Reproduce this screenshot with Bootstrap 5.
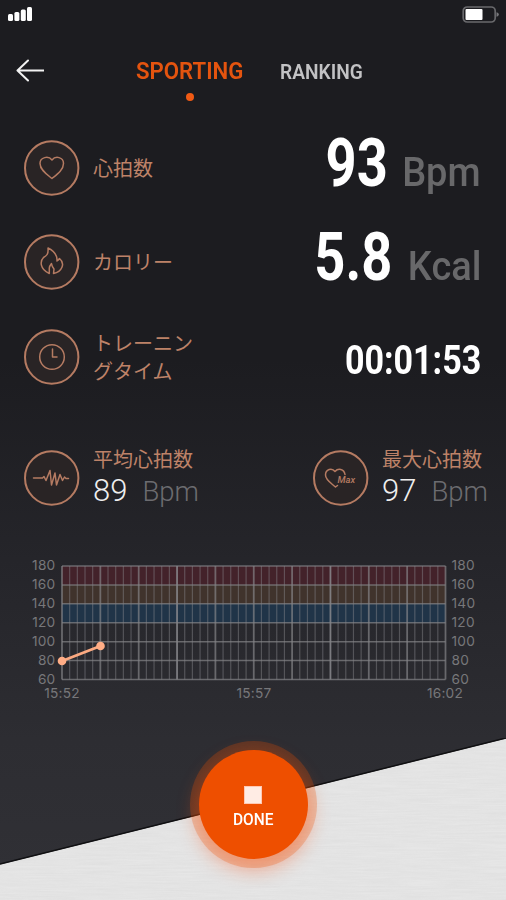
<!DOCTYPE html>
<html lang="ja">
<head>
<meta charset="utf-8">
<meta name="viewport" content="width=device-width, initial-scale=1">
<title>Sporting</title>
<link href="https://cdn.jsdelivr.net/npm/bootstrap@5.3.0/dist/css/bootstrap.min.css" rel="stylesheet">
<style>
body { margin: 0; background: #1c1c20; }
.screen { width: 506px; height: 900px; background: linear-gradient(#1c1c20 0, #1c1c20 360px, #25252a 560px, #2d2d32 740px, #303035 870px); font-family: Roboto, "Noto Sans CJK JP", sans-serif; color: #fff; }
svg { display: block; flex: none; }
.status { height: 30px; padding: 6px 7px 0 8px; }
.topbar { height: 91px; padding-left: 16px; }
.back { margin-top: 28px; }
.tabs { margin-left: 92px; padding-top: 27px; }
.tab-link { display: block; line-height: 28px; font-weight: 600; white-space: nowrap; transform-origin: left; }
.tab-on { width: 107px; font-size: 24px; color: #e4540f; transform: scaleX(.925); }
.tab-off { font-size: 20.5px; color: #c2c2c4; margin: 1px 0 0 37px; transform: scaleX(.935); }
.tab-dot { width: 8px; height: 8px; margin: 8px 0 0 50px; background: #f05a14; border-radius: 50%; }
.metric { height: 94.4px; padding: 0 25px 0 24px; }
.ring { stroke: #b57b62; fill: none; stroke-width: 1.5; stroke-linecap: round; stroke-linejoin: round; }
.ring-bg { fill: #292425; stroke-width: 2; }
.jp { font-family: "Noto Sans CJK JP", sans-serif; font-size: 20px; line-height: 28px; color: #bd8268; white-space: nowrap; }
.label-gap { margin-left: 13px; }
.reading { padding-bottom: 10px; }
.big { font-size: 67px; line-height: 67px; font-weight: 700; transform: scaleX(.81); transform-origin: right; }
.unit { font-size: 40px; line-height: 40px; font-weight: 500; color: #68686a; margin-left: 11px; transform: scaleX(.95); transform-origin: right; }
.clock { font-size: 41.5px; line-height: 42px; font-weight: 700; padding-top: 7px; transform: scaleX(.82); transform-origin: right; }
.averages { height: 154px; padding: 41px 18px 0 24px; }
.avg-ring { margin-top: 5px; }
.avg { font-size: 31px; line-height: 34px; margin-top: 1px; font-weight: 300; color: #eee; }
.avg-unit { font-size: 27.5px; font-weight: 300; color: #6c6c70; margin-left: 15px; }
.chart text { font-family: Inter, sans-serif; font-size: 13.7px; letter-spacing: .25px; fill: #77777a; }
.footer-stack { display: grid; height: 162px; }
.footer-stack > * { grid-area: 1 / 1; }
.done { width: 109px; height: 109px; margin-top: 12px; padding: 0; border-radius: 50%; background: #ee4f00; color: #fff; box-shadow: 0 0 0 9px rgba(238,79,0,.25), 0 8px 18px 4px rgba(255,80,20,.36); z-index: 1; }
.done:hover { background: #ee4f00; color: #fff; }
.stop { width: 18px; height: 18px; background: #ffece4; border: 1px solid #ffc9b3; margin-top: 6px; }
.done-label { font-size: 17px; line-height: 20px; margin-top: 5px; font-weight: 500; transform: scaleX(.91); }
</style>
</head>
<body>
<main class="screen d-flex flex-column overflow-hidden">
  <div class="status d-flex justify-content-between align-items-start">
    <svg width="25" height="16" fill="#fff"><rect x="0" y="8" width="5" height="7" rx="1.5"/><rect x="6.4" y="6" width="5" height="9" rx="1.5"/><rect x="12.8" y="3.5" width="5" height="11.5" rx="1.5"/><rect x="19" y="1" width="5" height="14" rx="1.5"/></svg>
    <svg width="37" height="17"><rect x="1.2" y="1" width="32" height="15" rx="4" fill="none" stroke="#69696c" stroke-width="1.7"/><rect x="3.5" y="3" width="17" height="11" rx="1" fill="#fff"/><path d="M34.5 6.2q2.3.4 2.3 2.3t-2.3 2.3z" fill="#77777a"/></svg>
  </div>

  <header class="topbar d-flex align-items-start">
    <svg class="back" width="28" height="24" fill="none" stroke="#f2f2f2" stroke-width="2" stroke-linecap="round" stroke-linejoin="round"><path d="M12 2.5 1.5 12.5 12 22.5M2 12.5h25.500"/></svg>
    <nav class="tabs d-flex">
      <div><span class="tab-link tab-on">SPORTING</span><div class="tab-dot"></div></div>
      <span class="tab-link tab-off">RANKING</span>
    </nav>
  </header>

  <section class="metric d-flex align-items-center justify-content-between">
    <div class="d-flex align-items-center">
      <svg class="ring" width="56" height="56"><circle class="ring-bg" cx="27.700" cy="28" r="26.700"/><path d="M28 38.500C23 34.500 16 30 16 23.500C16 17 24.500 15.500 28 20C31.500 15.500 39.500 17 39.500 23.500C39.500 30 33 34.500 28 38.500Z"/></svg>
      <span class="jp label-gap">心拍数</span>
    </div>
    <div class="reading d-flex align-items-baseline"><span class="big">93</span><span class="unit">Bpm</span></div>
  </section>

  <section class="metric d-flex align-items-center justify-content-between">
    <div class="d-flex align-items-center">
      <svg class="ring" width="56" height="56"><circle class="ring-bg" cx="27.700" cy="28" r="26.700"/><path d="M24 14C24.500 20 23 21.500 19.500 23.500C16 27 15.500 35 25.300 39.500V34Q25.500 32 27.500 29.500Q28 33 30 35L29.500 39.500C38 38 41.500 29.500 35.500 24.500Q34.500 26 33 27C33.500 21 29 16.500 24 14Z"/></svg>
      <span class="jp label-gap">カロリー</span>
    </div>
    <div class="reading d-flex align-items-baseline"><span class="big">5.8</span><span class="unit">Kcal</span></div>
  </section>

  <section class="metric d-flex align-items-center justify-content-between">
    <div class="d-flex align-items-center">
      <svg class="ring" width="56" height="56"><circle class="ring-bg" cx="27.700" cy="28" r="26.700"/><circle cx="28" cy="28" r="12.300"/><path d="M28.500 20v8h4.500"/></svg>
      <span class="jp label-gap">トレーニン<br>グタイム</span>
    </div>
    <span class="clock">00:01:53</span>
  </section>

  <section class="averages d-flex justify-content-between">
    <div class="d-flex align-items-start">
      <svg class="ring avg-ring" width="56" height="56"><circle class="ring-bg" cx="27.700" cy="28" r="26.700"/><path d="M9.500 28H18.500L20 26.500 22 30.500 26 20.500 27.500 35 31 23 32.500 35 36 24.500 38.500 30.500 40.500 27 42 28.500H44.500"/></svg>
      <div class="label-gap"><div class="jp">平均心拍数</div><div class="avg">89<span class="avg-unit">Bpm</span></div></div>
    </div>
    <div class="d-flex align-items-start">
      <svg class="ring avg-ring" width="56" height="56"><circle class="ring-bg" cx="27.700" cy="28" r="26.700"/><path d="M22.500 37C18 33 12.500 30 12.500 25C12.500 19 19 17.500 22 21.500C25 18 31 18.500 32 24.500M22.500 37l2-1.500"/><text x="24.500" y="33" font-size="9.500" font-style="italic" font-weight="500" fill="#b57b62" stroke="none">Max</text></svg>
      <div class="label-gap"><div class="jp">最大心拍数</div><div class="avg">97<span class="avg-unit">Bpm</span></div></div>
    </div>
  </section>

  <svg class="chart" id="chart" width="506" height="180" viewBox="0 558 506 180"></svg>

  <footer class="footer-stack">
    <svg width="506" height="162">
      <defs>
        <filter id="brushed" x="0" y="0" width="100%" height="100%"><feTurbulence type="fractalNoise" baseFrequency=".025 .6" numOctaves="3" seed="4"/><feColorMatrix values="0 0 0 0 .5  0 0 0 0 .5  0 0 0 0 .5  .5 0 0 0 -.12"/></filter>
        <clipPath id="slope"><path d="M0 126.500 506 .5V162H0z"/></clipPath>
      </defs>
      <g clip-path="url(#slope)"><rect width="506" height="162" fill="#e6e6e6"/><rect width="506" height="162" filter="url(#brushed)" opacity=".4"/></g>
      <path d="M0 126 506 0" stroke="#101012" stroke-width="1.500"/>
    </svg>
    <button class="btn done d-flex flex-column align-items-center justify-content-center border-0 mx-auto"><span class="stop"></span><span class="done-label">DONE</span></button>
  </footer>
</main>
<script src="https://cdn.jsdelivr.net/npm/bootstrap@5.3.0/dist/js/bootstrap.bundle.min.js"></script>
<script>
// Heart-rate chart: coloured zones, time grid, scale and recorded samples
const L = 62, R = 445.500, T = 566, B = 679.500, rowH = (B - T) / 6;
let out = '';
['#43222a', '#40332c', '#203448'].forEach((c, i) => out += `<rect x="${L}" y="${T + i * rowH}" width="${R - L}" height="${rowH}" fill="${c}"/>`);
for (let i = 0; i <= 50; i++) {
  const x = L + i * (R - L) / 50, major = i % 5 === 0, strong = i === 15 || i === 35;
  out += `<path d="M${x} ${T}V${B}" stroke="#8a8a8e" stroke-opacity="${strong ? .85 : major ? .65 : .45}" stroke-width="${major ? 1.8 : 1.2}"/>`;
}
for (let i = 0; i <= 6; i++) {
  const y = T + i * rowH, v = 180 - i * 20;
  out += `<path d="M${L} ${y}H${R}" stroke="#858588" stroke-opacity=".7" stroke-width="1.500"/>`;
  out += `<text x="55.500" y="${y + 4}" text-anchor="end">${v}</text><text x="451.500" y="${y + 4}">${v}</text>`;
}
[['15:52', 62], ['15:57', 254], ['16:02', 445]].forEach(([t, x]) => out += `<text x="${x}" y="698" text-anchor="middle">${t}</text>`);
out += '<path d="M62 661 100.500 646" stroke="#fba981" stroke-width="2.800"/><circle cx="62" cy="661" r="4.300" fill="#ffad86"/><circle cx="100.500" cy="646" r="4.300" fill="#ffad86"/>';
document.getElementById('chart').innerHTML = out;
</script>
</body>
</html>
